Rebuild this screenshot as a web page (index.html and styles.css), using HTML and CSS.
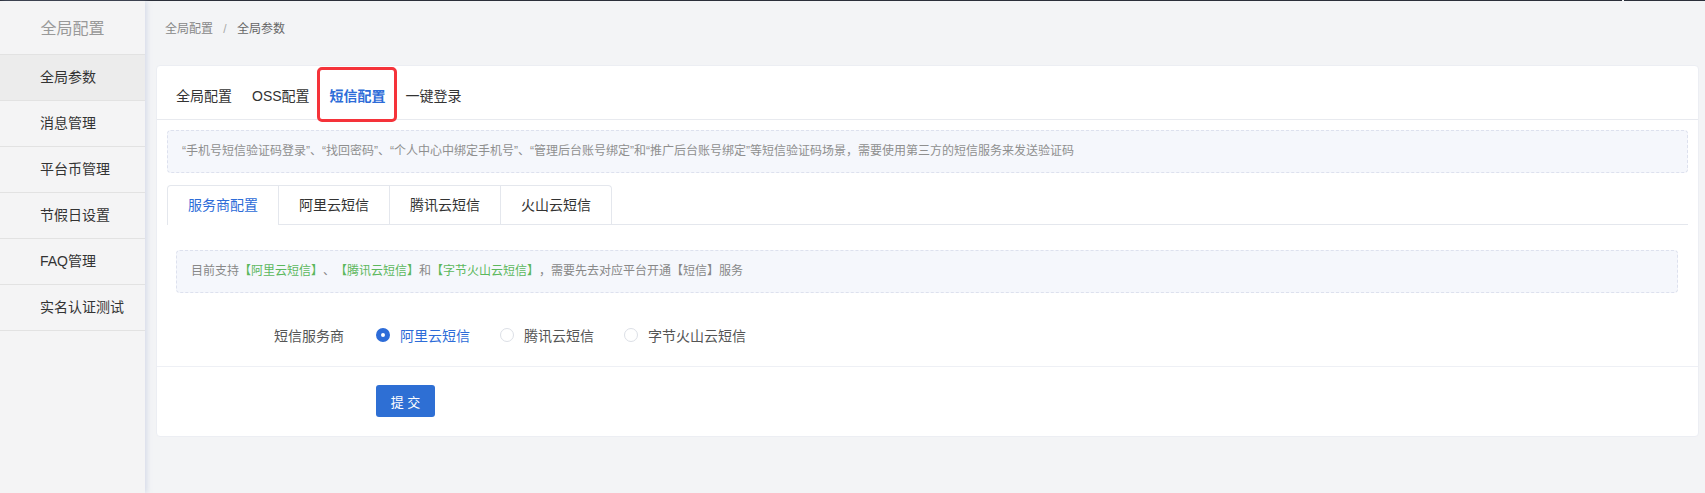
FILE: index.html
```html
<!DOCTYPE html>
<html>
<head>
    <title>全局参数</title>
    <link rel="stylesheet" href="styles.css">
</head>
<body>
    <div class="topline"></div>
    <div class="layout">
        <div class="sidebar">
            <div class="sidebar-title">全局配置</div>
            <a class="menu-item active">全局参数</a>
            <a class="menu-item">消息管理</a>
            <a class="menu-item">平台币管理</a>
            <a class="menu-item">节假日设置</a>
            <a class="menu-item">FAQ管理</a>
            <a class="menu-item">实名认证测试</a>
        </div>

        <div class="main">
            <div class="breadcrumb">
                <span class="crumb">全局配置</span>
                <span class="sep">/</span>
                <span class="crumb current">全局参数</span>
            </div>

            <div class="card">
                <div class="nav-tabs">
                    <span class="nav-tab">全局配置</span>
                    <span class="nav-tab">OSS配置</span>
                    <span class="nav-tab active">短信配置</span>
                    <span class="nav-tab">一键登录</span>
                </div>
                <div class="highlight-box"></div>

                <div class="card-body">
                    <div class="tip">“手机号短信验证码登录”、“找回密码”、“个人中心中绑定手机号”、“管理后台账号绑定”和“推广后台账号绑定”等短信验证码场景，需要使用第三方的短信服务来发送验证码</div>

                    <div class="sub-tabs">
                        <span class="sub-tab active">服务商配置</span>
                        <span class="sub-tab">阿里云短信</span>
                        <span class="sub-tab">腾讯云短信</span>
                        <span class="sub-tab">火山云短信</span>
                    </div>

                    <div class="pane">
                        <div class="tip tip-inner">目前支持<span class="green">【阿里云短信】</span>、<span class="green">【腾讯云短信】</span>和<span class="green">【字节火山云短信】</span>，需要先去对应平台开通【短信】服务</div>

                        <div class="form-row">
                            <label class="form-label">短信服务商</label>
                            <div class="radios">
                                <span class="radio checked"><i class="dot"></i>阿里云短信</span>
                                <span class="radio"><i class="dot"></i>腾讯云短信</span>
                                <span class="radio"><i class="dot"></i>字节火山云短信</span>
                            </div>
                        </div>
                    </div>
                </div>

                <div class="card-footer">
                    <button class="btn-primary">提 交</button>
                </div>
            </div>
        </div>
    </div>
</body>
</html>
```

FILE: styles.css
```css
body {
    margin: 0;
    background: #f3f4f6;
    font-family: "Liberation Sans", "Noto Sans CJK SC", sans-serif;
    color: #333;
    height: 493px;
    overflow: hidden;
    text-spacing-trim: space-all;
}
.topline {
    height: 1px;
    background: linear-gradient(to right, #2b2f3a 1622px, #f3f4f6 1622px, #f3f4f6 1624px, #2b2f3a 1624px);
}
.layout {
    display: flex;
    height: 492px;
}
.sidebar {
    width: 145px;
    flex: none;
    background: #f4f4f5;
    box-shadow: 2px 0 5px rgba(160, 175, 210, 0.35);
    position: relative;
    z-index: 1;
}
.sidebar-title {
    height: 53px;
    line-height: 56px;
    text-align: center;
    font-size: 16px;
    color: #999;
    border-bottom: 1px solid #e2e2e2;
}
.menu-item {
    display: block;
    height: 45px;
    line-height: 45px;
    padding-left: 40px;
    font-size: 14px;
    color: #333;
    border-bottom: 1px solid #e2e2e2;
}
.menu-item.active {
    background: #ececec;
}
.main {
    flex: 1;
    padding: 0 6px 0 11px;
}
.breadcrumb {
    padding: 18px 0 0 9px;
    height: 20px;
    line-height: 20px;
    font-size: 12px;
    color: #888;
}
.breadcrumb .sep {
    margin: 0 7px;
    color: #aaa;
}
.breadcrumb .current {
    color: #666;
}
.card {
    position: relative;
    margin-top: 26px;
    background: #fff;
    border: 1px solid #eceef3;
    border-radius: 4px;
}
.nav-tabs {
    display: flex;
    align-items: center;
    gap: 20px;
    height: 49px;
    padding: 4px 19px 0;
    border-bottom: 1px solid #e8eaef;
    font-size: 14px;
}
.nav-tab {
    color: #333;
}
.nav-tab.active {
    color: #2d6cd8;
    font-weight: bold;
}
.highlight-box {
    position: absolute;
    left: 160px;
    top: 1px;
    width: 74px;
    height: 49px;
    border: 3px solid #f5333a;
    border-radius: 5px;
}
.card-body {
    padding: 10px 10px 0;
}
.tip {
    height: 41px;
    line-height: 41px;
    padding-left: 14px;
    font-size: 12px;
    color: #8f8f8f;
    background: #f5f7fc;
    border: 1px dashed #dde1ee;
    border-radius: 4px;
}
.sub-tabs {
    display: flex;
    margin-top: 12px;
    border-bottom: 1px solid #e4e7ed;
}
.sub-tab {
    width: 110px;
    height: 38px;
    line-height: 39px;
    text-align: center;
    font-size: 14px;
    color: #333;
    border: 1px solid #e4e7ed;
    border-left: none;
    border-bottom: none;
}
.sub-tab:first-child {
    border-left: 1px solid #e4e7ed;
    border-top-left-radius: 4px;
}
.sub-tab:last-child {
    border-top-right-radius: 4px;
}
.sub-tab.active {
    color: #2d6cd8;
    background: #fff;
    margin-bottom: -1px;
    height: 39px;
}
.pane {
    padding: 25px 10px 0 9px;
}
.tip-inner {
    padding-left: 14px;
    color: #888;
}
.green {
    color: #5cb85c;
}
.form-row {
    display: flex;
    align-items: center;
    height: 32px;
    margin-top: 26px;
    padding-bottom: 15px;
    font-size: 14px;
}
.form-label {
    width: 168px;
    margin-right: 32px;
    text-align: right;
    color: #555;
}
.radios {
    display: flex;
    gap: 30px;
}
.radio {
    display: flex;
    align-items: center;
    color: #555;
}
.radio .dot {
    width: 12px;
    height: 12px;
    border: 1px solid #dcdfe6;
    border-radius: 50%;
    margin-right: 10px;
    background: #fff;
}
.radio.checked {
    color: #2d6cd8;
}
.radio.checked .dot {
    width: 4px;
    height: 4px;
    border: 5px solid #2d6cd8;
}
.card-footer {
    border-top: 1px solid #eef0f5;
    padding: 18px 0 19px 219px;
}
.btn-primary {
    width: 59px;
    height: 32px;
    border: none;
    border-radius: 3px;
    background: #2e6fd4;
    color: #fff;
    font-family: inherit;
    font-size: 13px;
}
```
